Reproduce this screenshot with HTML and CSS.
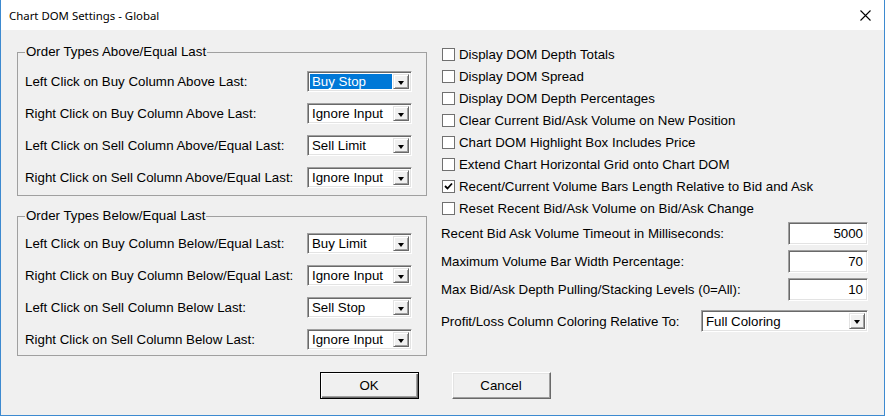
FILE: index.html
```html
<!DOCTYPE html>
<html lang="en">
<head>
    <meta charset="UTF-8">
    <title>Chart DOM Settings - Global</title>
    <link rel="stylesheet" href="styles.css">
</head>
<body>
<div class="window">
    <div class="titlebar">
        <span class="title">Chart DOM Settings - Global</span>
        <span class="close">
            <svg width="11" height="11" viewBox="0 0 11 11">
                <path d="M0.5 0.5 L10.5 10.5 M10.5 0.5 L0.5 10.5" stroke="#000" stroke-width="1.1"/>
            </svg>
        </span>
    </div>

    <div class="content">
        <div class="columns">
            <!-- Order type mappings -->
            <div class="left">
                <fieldset class="group group-above">
                    <legend>Order Types Above/Equal Last</legend>
                    <div class="row">
                        <span class="label">Left Click on Buy Column Above Last:</span>
                        <div class="combo"><span class="value selected">Buy Stop</span><span class="arrow"></span></div>
                    </div>
                    <div class="row">
                        <span class="label">Right Click on Buy Column Above Last:</span>
                        <div class="combo"><span class="value">Ignore Input</span><span class="arrow"></span></div>
                    </div>
                    <div class="row">
                        <span class="label">Left Click on Sell Column Above/Equal Last:</span>
                        <div class="combo"><span class="value">Sell Limit</span><span class="arrow"></span></div>
                    </div>
                    <div class="row">
                        <span class="label">Right Click on Sell Column Above/Equal Last:</span>
                        <div class="combo"><span class="value">Ignore Input</span><span class="arrow"></span></div>
                    </div>
                </fieldset>

                <fieldset class="group group-below">
                    <legend>Order Types Below/Equal Last</legend>
                    <div class="row">
                        <span class="label">Left Click on Buy Column Below/Equal Last:</span>
                        <div class="combo"><span class="value">Buy Limit</span><span class="arrow"></span></div>
                    </div>
                    <div class="row">
                        <span class="label">Right Click on Buy Column Below/Equal Last:</span>
                        <div class="combo"><span class="value">Ignore Input</span><span class="arrow"></span></div>
                    </div>
                    <div class="row">
                        <span class="label">Left Click on Sell Column Below Last:</span>
                        <div class="combo"><span class="value">Sell Stop</span><span class="arrow"></span></div>
                    </div>
                    <div class="row">
                        <span class="label">Right Click on Sell Column Below Last:</span>
                        <div class="combo"><span class="value">Ignore Input</span><span class="arrow"></span></div>
                    </div>
                </fieldset>
            </div>

            <!-- Display options -->
            <div class="right">
                <div class="check"><span class="box"></span>Display DOM Depth Totals</div>
                <div class="check"><span class="box"></span>Display DOM Spread</div>
                <div class="check"><span class="box"></span>Display DOM Depth Percentages</div>
                <div class="check"><span class="box"></span>Clear Current Bid/Ask Volume on New Position</div>
                <div class="check"><span class="box"></span>Chart DOM Highlight Box Includes Price</div>
                <div class="check"><span class="box"></span>Extend Chart Horizontal Grid onto Chart DOM</div>
                <div class="check"><span class="box checked">
                    <svg width="9" height="9" viewBox="0 0 9 9"><path d="M1 4 L3.5 6.5 L8 1.5" stroke="#000" stroke-width="1.8" fill="none"/></svg>
                </span>Recent/Current Volume Bars Length Relative to Bid and Ask</div>
                <div class="check"><span class="box"></span>Reset Recent Bid/Ask Volume on Bid/Ask Change</div>

                <div class="field">
                    <span>Recent Bid Ask Volume Timeout in Milliseconds:</span>
                    <span class="edit">5000</span>
                </div>
                <div class="field">
                    <span>Maximum Volume Bar Width Percentage:</span>
                    <span class="edit">70</span>
                </div>
                <div class="field">
                    <span>Max Bid/Ask Depth Pulling/Stacking Levels (0=All):</span>
                    <span class="edit">10</span>
                </div>
                <div class="field field-combo">
                    <span>Profit/Loss Column Coloring Relative To:</span>
                    <div class="combo wide"><span class="value">Full Coloring</span><span class="arrow"></span></div>
                </div>
            </div>
        </div>

        <div class="buttons">
            <button class="btn default">OK</button>
            <button class="btn">Cancel</button>
        </div>
    </div>
</div>
</body>
</html>
```

FILE: styles.css
```css
* {
    box-sizing: border-box;
}
body {
    margin: 0;
    background: #f0f0f0;
}
.window {
    width: 885px;
    height: 416px;
    border: 1px solid #3d8ad0;
    border-top: none;
    background: #f0f0f0;
    display: flex;
    flex-direction: column;
    font-family: "Liberation Sans", Arial, sans-serif;
    font-size: 13.3px;
    color: #000;
}
.titlebar {
    height: 30px;
    background: #fff;
    display: flex;
    align-items: center;
    justify-content: space-between;
    padding: 0 12px 0 8px;
}
.title {
    font-family: "Noto Sans", sans-serif;
    font-size: 11.4px;
}
.close {
    width: 14px;
    height: 14px;
    display: flex;
    align-items: center;
    justify-content: center;
}
.content {
    flex: 1;
    padding: 13px 16px 0 16px;
    display: flex;
    flex-direction: column;
}
.columns {
    display: flex;
    gap: 14px;
}
.left {
    width: 410px;
    padding-top: 1px;
    display: flex;
    flex-direction: column;
    gap: 12px;
}

/* group boxes */
.group {
    margin: 0;
    min-width: 0;
    border: 1px solid #a0a0a0;
    padding: 5px 0 2px 7px;
}
.group-below {
    padding-top: 3px;
    padding-bottom: 0;
}
.group legend {
    padding: 0 1px;
    line-height: 16px;
}
.row {
    height: 32px;
    display: flex;
    align-items: center;
}
.label {
    flex: 0 0 282px;
}

/* drop down lists */
.combo {
    width: 105px;
    height: 21px;
    background: #fff;
    border: 1px solid;
    border-color: #a0a0a0 #fff #fff #a0a0a0;
    box-shadow: inset 1px 1px #696969, inset -1px -1px #e3e3e3;
    display: flex;
    align-items: center;
    padding: 2px;
}
.combo .value {
    flex: 1;
    height: 100%;
    display: flex;
    align-items: center;
    padding-left: 2px;
}
.combo .value.selected {
    background: #0078d7;
    color: #fff;
}
.combo .arrow {
    flex: 0 0 16px;
    height: 100%;
    margin-left: 1px;
    background: #f0f0f0;
    border: 1px solid;
    border-color: #e3e3e3 #696969 #696969 #e3e3e3;
    box-shadow: inset 1px 1px #fff, inset -1px -1px #a0a0a0;
    position: relative;
}
.combo .arrow::after {
    content: "";
    position: absolute;
    left: 3.5px;
    top: 6px;
    border-left: 3.5px solid transparent;
    border-right: 3.5px solid transparent;
    border-top: 4px solid #000;
}
.combo.wide {
    width: 167px;
    height: 22px;
}

/* right column */
.right {
    width: 427px;
    display: flex;
    flex-direction: column;
}
.check {
    height: 22px;
    display: flex;
    align-items: center;
    padding-left: 1px;
}
.box {
    width: 13px;
    height: 13px;
    margin-right: 4px;
    background: #fff;
    border: 1px solid #707070;
    display: flex;
    align-items: center;
    justify-content: center;
}
.field {
    height: 28px;
    display: flex;
    align-items: center;
    justify-content: space-between;
}
.field-combo {
    margin-top: 4px;
}
.edit {
    width: 80px;
    height: 23px;
    background: #fff;
    border: 1px solid;
    border-color: #a0a0a0 #fff #fff #a0a0a0;
    box-shadow: inset 1px 1px #696969, inset -1px -1px #e3e3e3;
    display: flex;
    align-items: center;
    justify-content: flex-end;
    padding-right: 4px;
}

/* dialog buttons */
.buttons {
    display: flex;
    justify-content: center;
    gap: 33px;
    padding-right: 15px;
    margin-top: 16px;
}
.btn {
    width: 99px;
    height: 27px;
    font: inherit;
    background: #f0f0f0;
    border: 1px solid;
    border-color: #fff #696969 #696969 #fff;
    box-shadow: inset -1px -1px #a0a0a0, inset 1px 1px #e3e3e3;
    padding: 0;
}
.btn.default {
    border-color: #000;
    box-shadow: inset 1px 1px #fff, inset -1px -1px #696969, inset -2px -2px #a0a0a0;
}
```
